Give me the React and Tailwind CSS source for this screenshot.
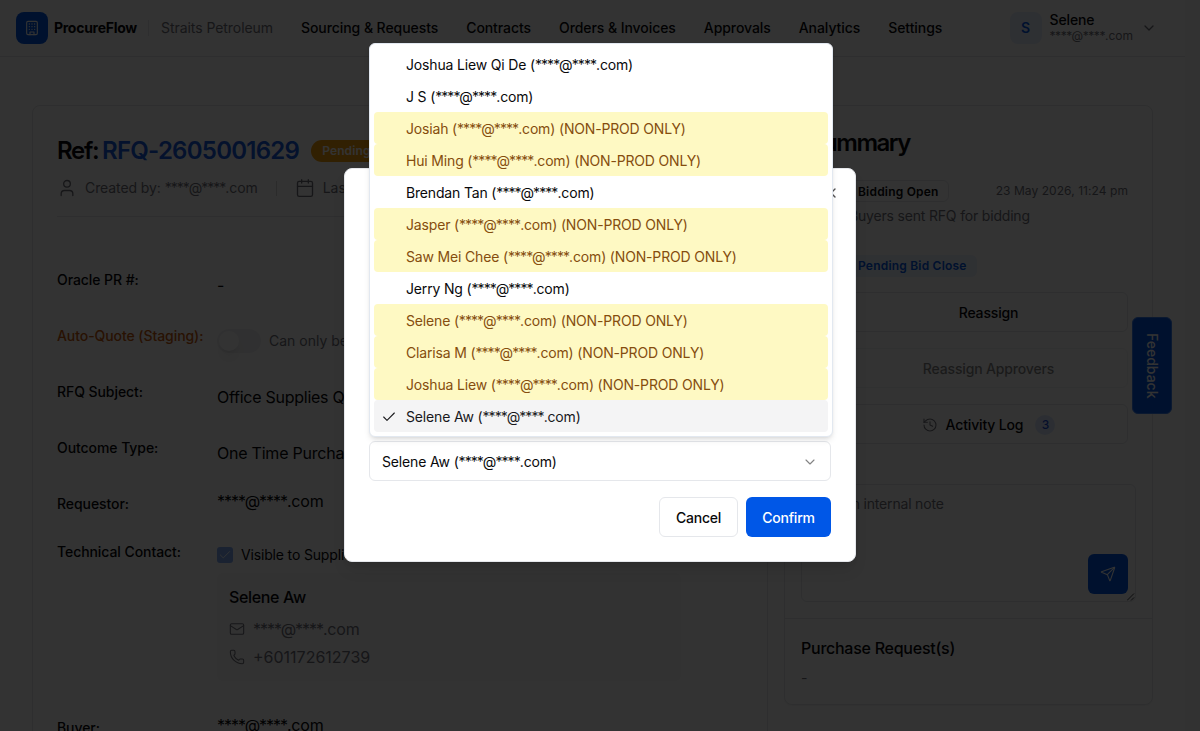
import {
  Calendar,
  Check,
  ChevronDown,
  History,
  Mail,
  Phone,
  Send,
  User,
  X,
} from "lucide-react";

const navItems = [
  "Sourcing & Requests",
  "Contracts",
  "Orders & Invoices",
  "Approvals",
  "Analytics",
  "Settings",
];

const users = [
  { name: "Joshua Liew Qi De" },
  { name: "J S" },
  { name: "Josiah", nonProd: true },
  { name: "Hui Ming", nonProd: true },
  { name: "Brendan Tan" },
  { name: "Jasper", nonProd: true },
  { name: "Saw Mei Chee", nonProd: true },
  { name: "Jerry Ng" },
  { name: "Selene", nonProd: true },
  { name: "Clarisa M", nonProd: true },
  { name: "Joshua Liew", nonProd: true },
  { name: "Selene Aw", selected: true },
];

const Email = ({ className = "tracking-[-0.066em]" }) => (
  <span>
    <span className={className}>****@****</span>.com
  </span>
);

const BuildingIcon = () => (
  <svg
    className="size-4 text-white"
    viewBox="0 0 24 24"
    fill="none"
    stroke="currentColor"
    strokeWidth="1.7"
    strokeLinecap="round"
    strokeLinejoin="round"
  >
    <rect x="4" y="2" width="16" height="20" rx="2" />
    <path d="M9 22v-4h6v4" />
    <path
      strokeWidth="2"
      d="M8 6h.01M12 6h.01M16 6h.01M8 10h.01M12 10h.01M16 10h.01M8 14h.01M12 14h.01M16 14h.01"
    />
  </svg>
);

const Header = () => (
  <header className="flex h-[57px] w-[1185px] items-center border-b border-[#e5e7eb] bg-white pl-4">
    <div className="flex size-8 items-center justify-center rounded-lg bg-[#0057e7]">
      <BuildingIcon />
    </div>
    <span className="ml-1.5 w-[94px] text-sm font-bold tracking-[-0.02em]">
      ProcureFlow
    </span>
    <div className="mr-3 h-4 w-px bg-[#e5e7eb]" />
    <span className="w-[140px] text-sm tracking-[-0.004em] text-[#71717a]">
      Straits Petroleum
    </span>
    <nav className="flex gap-7 text-sm font-medium tracking-[-0.005em]">
      {navItems.map((item) => (
        <a key={item}>{item}</a>
      ))}
    </nav>
    <div className="mr-7 ml-auto flex items-center">
      <div className="flex size-8 items-center justify-center rounded-lg bg-[#e6eefd] text-sm font-semibold text-[#0057e7]">
        S
      </div>
      <div className="ml-2 flex flex-col">
        <span className="-mt-px text-sm leading-4 font-medium tracking-[-0.01em]">
          Selene
        </span>
        <span className="text-xs leading-[15px] text-[#71717a]">
          <Email className="tracking-[-0.038em]" />
        </span>
      </div>
      <ChevronDown className="ml-2 size-4 text-[#71717a]" />
    </div>
  </header>
);

const Field = ({ label, className, labelClass = "", children }) => (
  <div className={`grid grid-cols-[160px_1fr] items-start ${className}`}>
    <span className={`text-sm font-medium tracking-[-0.005em] ${labelClass}`}>
      {label}
    </span>
    {children}
  </div>
);

const RequestCard = () => (
  <section className="h-[700px] rounded-lg border border-[#e5e7eb] bg-white px-6 pt-[29px] shadow-xs">
    <div className="flex h-8 items-center">
      <h1 className="text-2xl font-semibold tracking-[-0.055em]">
        Ref:{" "}
        <span className="-ml-px tracking-[-0.031em] text-[#1659df]">
          RFQ-2605001629
        </span>
      </h1>
      <span className="ml-3 flex h-[22px] items-center rounded-full bg-[#f59e0b] px-[11px] text-xs font-semibold tracking-[0.01em] text-white">
        Pending Bid
      </span>
    </div>
    <div className="mt-[5px] flex h-8 items-center text-sm text-[#71717a]">
      <User className="size-5" strokeWidth={1.6} />
      <span className="ml-2 tracking-[-0.006em]">
        Created by: <Email className="tracking-[-0.07em]" />
      </span>
      <div className="mr-[18px] ml-[18px] h-[15px] w-px bg-[#d4d4d8]" />
      <Calendar className="size-5" strokeWidth={1.6} />
      <span className="ml-2">Last</span>
    </div>
    <div className="mt-3 h-px bg-[#e5e7eb]" />

    <div className="mt-[53px] tracking-[-0.01em]">
      <Field label="Oracle PR #:" className="h-14">
        <span className="pt-[3px]">-</span>
      </Field>
      <Field
        label="Auto-Quote (Staging):"
        className="h-14"
        labelClass="text-[#c9590c]"
      >
        <div className="flex h-[30px] items-center">
          <div className="flex h-6 w-11 items-center rounded-full bg-[#f1f1f3] p-0.5">
            <div className="size-5 rounded-full bg-white shadow-lg" />
          </div>
          <span className="ml-2 text-sm tracking-normal text-[#71717a]">
            Can only be
          </span>
        </div>
      </Field>
      <Field label="RFQ Subject:" className="h-14">
        <span className="pt-[3px] tracking-[-0.016em]">Office Supplies Q</span>
      </Field>
      <Field label="Outcome Type:" className="h-[51px]">
        <span className="pt-[3px] tracking-[-0.014em]">One Time Purchase</span>
      </Field>
      <Field label="Requestor:" className="h-[53px]" labelClass="pt-[5px]">
        <Email />
      </Field>
      <Field label="Technical Contact:" className="h-[171px]">
        <div>
          <div className="flex h-[31px] items-center pb-[5px] text-sm">
            <span className="flex size-4 items-center justify-center rounded-[3px] bg-[#80abf3] text-white">
              <Check className="size-3.5" strokeWidth={1.5} />
            </span>
            <span className="ml-2">Visible to Supplier</span>
          </div>
          <div className="h-[108px] w-[464px] rounded-md bg-[#f9f9fa] px-3 pt-3">
            <p className="font-medium tracking-[-0.022em]">Selene Aw</p>
            <div className="mt-2 flex items-center gap-2 text-[#71717a]">
              <Mail className="size-4" strokeWidth={1.6} />
              <Email />
            </div>
            <div className="mt-1 flex items-center gap-2 tracking-normal text-[#71717a]">
              <Phone className="size-4" strokeWidth={1.6} />
              <span>+601172612739</span>
            </div>
          </div>
        </div>
      </Field>
      <Field label="Buyer:" className="" labelClass="pt-[5px]">
        <Email />
      </Field>
    </div>
  </section>
);

const SummaryCard = () => (
  <aside className="h-[600px] rounded-lg border border-[#e5e7eb] bg-white shadow-xs">
    <div className="px-6 pt-[21px]">
      <h2 className="text-2xl leading-8 font-semibold tracking-[-0.063em]">
        Summary
      </h2>
      <div className="ml-10">
        <div className="mt-[21px] flex h-[22px] items-center justify-between">
          <span className="-ml-px flex h-[22px] items-center rounded-md border border-[#e5e7eb] px-[9px] pt-px text-xs font-semibold tracking-[0.017em]">
            Bidding Open
          </span>
          <span className="text-xs tracking-[0.005em] text-[#71717a]">
            23 May 2026, 11:24 pm
          </span>
        </div>
        <p className="mt-1 text-sm tracking-[-0.013em] text-[#71717a]">
          Buyers sent RFQ for bidding
        </p>
        <span className="mt-[29px] -ml-px flex h-[22px] w-fit items-center rounded-md bg-[#ebf2fd] px-2.5 text-xs font-semibold tracking-[0.017em] text-[#0057e7]">
          Pending Bid Close
        </span>
        <div className="mt-[15px] flex flex-col gap-4 text-sm font-medium tracking-[-0.011em]">
          <button className="h-10 rounded-md border border-[#e5e7eb] pt-px">
            Reassign
          </button>
          <button className="h-10 rounded-md border border-[#e5e7eb] pt-px opacity-50">
            Reassign Approvers
          </button>
          <button className="flex h-10 items-center justify-center rounded-md border border-[#e5e7eb] pt-px">
            <History className="size-4 text-[#71717a]" strokeWidth={1.6} />
            <span className="ml-2">Activity Log</span>
            <span className="ml-3 flex size-5 items-center justify-center rounded-full bg-[#dbe7fe] text-xs text-[#1d4ed8]">
              3
            </span>
          </button>
        </div>
      </div>
    </div>
    <div className="mt-10 px-4">
      <div className="relative h-[118px] rounded-md border border-[#e5e7eb] px-3 py-[9px] text-sm tracking-[-0.013em] text-[#71717a]">
        Add an internal note
        <button className="absolute right-[7px] bottom-[7px] flex size-10 items-center justify-center rounded-md bg-[#0057e7] text-white">
          <Send className="size-4" strokeWidth={1.6} />
        </button>
        <svg
          className="absolute right-0 bottom-0 size-2 text-[#3f3f46]"
          viewBox="0 0 8 8"
          fill="none"
          stroke="currentColor"
        >
          <path d="M0 7.5L7 0.5M4 7.5L7 4.5" />
        </svg>
      </div>
    </div>
    <div className="mt-4 border-t border-[#e5e7eb] px-4 pt-[17px]">
      <h3 className="font-medium tracking-[-0.016em]">Purchase Request(s)</h3>
      <p className="mt-2 text-sm text-[#71717a]">-</p>
    </div>
  </aside>
);

const ReassignDialog = () => (
  <div className="absolute top-[168px] left-[344px] flex h-[394px] w-[512px] flex-col justify-end gap-4 rounded-lg border border-[#e5e7eb] bg-white p-6 shadow-lg">
    <X className="absolute top-4 right-4 size-4 opacity-70" />
    <button className="flex h-10 items-center justify-between rounded-md border border-[#e5e7eb] px-3 pt-px text-sm tracking-[-0.011em]">
      <span>
        Selene Aw (<Email />)
      </span>
      <ChevronDown className="size-4 opacity-50" strokeWidth={1.7} />
    </button>
    <div className="flex justify-end gap-2 text-sm font-medium tracking-[-0.015em]">
      <button className="h-10 w-[79px] rounded-md border border-[#e5e7eb] pt-px">
        Cancel
      </button>
      <button className="h-10 w-[85px] rounded-md bg-[#0057e7] pt-px text-white">
        Confirm
      </button>
    </div>
  </div>
);

const itemStyle = (user) => {
  if (user.selected) return "bg-[#f4f4f5] text-[#18181b]";
  if (user.nonProd) return "bg-[#fef9c3] text-[#854d0e]";
  return "";
};

const UserMenu = () => (
  <ul className="absolute top-[43px] left-[369px] w-[464px] rounded-md border border-[#e2e8f0] bg-white p-1 text-sm tracking-[-0.012em] shadow-md">
    {users.map((user) => (
      <li
        key={user.name}
        className={`flex h-8 items-center rounded-sm pt-px ${itemStyle(user)}`}
      >
        <span className="flex w-8 pl-[7px]">
          {user.selected && <Check className="size-4" strokeWidth={1.6} />}
        </span>
        <span>
          {user.name} (<Email />){user.nonProd && " (NON-PROD ONLY)"}
        </span>
      </li>
    ))}
  </ul>
);

const App = () => {
  return (
    <div className="relative h-[731px] w-[1200px] overflow-hidden bg-[#fafafa] font-['Inter',sans-serif] text-[#09090b]">
      <div className="h-full w-[1185px] bg-white">
        <Header />
        <main className="ml-8 grid w-[1121px] grid-cols-[736px_1fr] items-start gap-4 pt-12">
          <RequestCard />
          <SummaryCard />
        </main>
      </div>

      <button className="absolute top-[317px] left-[1131.5px] flex h-[97px] w-[40.5px] items-center justify-center rounded-md border border-[#3b7ff0] bg-[#0057e7] text-sm font-medium text-white [writing-mode:vertical-rl]">
        Feedback
      </button>

      <div className="absolute inset-0 bg-black/80" />
      <ReassignDialog />
      <UserMenu />
    </div>
  );
};

export default App;
